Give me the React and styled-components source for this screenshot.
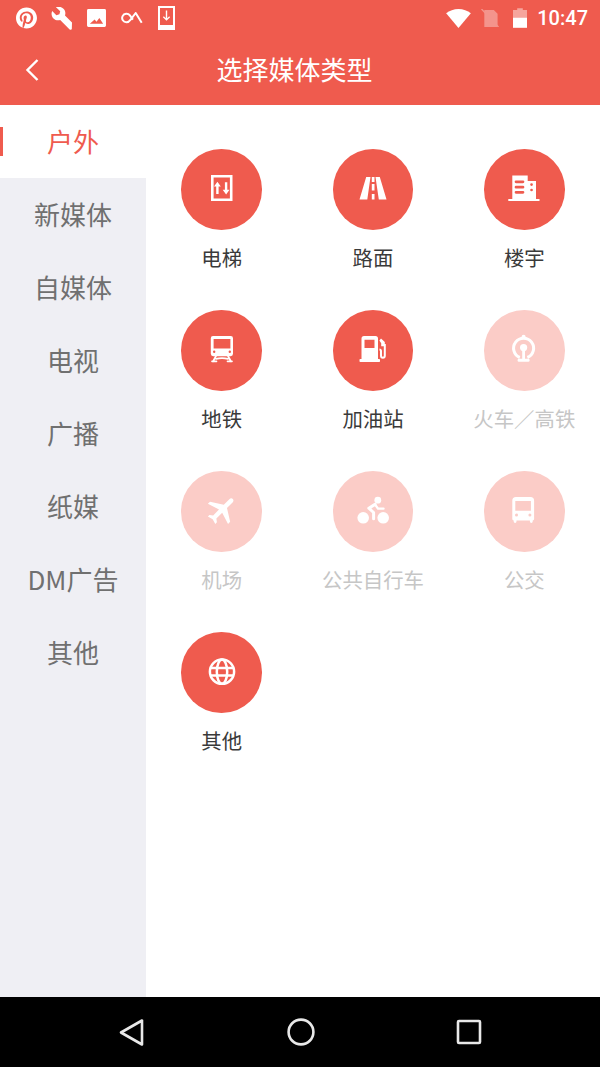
import React from "react";
import styled, { createGlobalStyle } from "styled-components";

const Global = createGlobalStyle`
  html, body { margin: 0; padding: 0; background: #fff; }
  body { font-family: "Noto Sans CJK SC", "Noto Sans", sans-serif; }
  * { box-sizing: border-box; }
`;
const RED = "#ef5b4e";

const Screen = styled.div`
  width: 600px; height: 1067px; display: flex; flex-direction: column; overflow: hidden;
`;
const Header = styled.header`
  height: 105px; background: ${RED}; color: #fff; display: flex; flex-direction: column; flex: none;
`;
const StatusBar = styled.div`
  height: 38px; display: flex; align-items: center; justify-content: space-between; padding: 0 12px 2px 16px;
`;
const StatusGroup = styled.div`
  display: flex; align-items: center; gap: ${p => p.$gap}px;
`;
const StatusSvg = styled.svg`
  display: block; flex: none; fill: #fff; margin-left: ${p => p.$ml || 0}px; opacity: ${p => p.$dim || 1};
`;
const Clock = styled.span`
  font-family: Roboto, sans-serif; font-size: 20px; font-weight: 500; line-height: 24px; width: 51px; white-space: nowrap; text-align: right;
`;
const Toolbar = styled.div`
  flex: 1; display: flex; align-items: center; padding-right: 75px; padding-bottom: 5px;
`;
const BackButton = styled.div`
  width: 64px; height: 40px; display: flex; align-items: center; padding-left: 25px; flex: none; position: relative; top: 1px;
`;
const Title = styled.h1`
  flex: 1; margin: 0; font-size: 26px; font-weight: 400; line-height: 36px; text-align: center; color: #fff;
`;
const Body = styled.main`
  flex: 1; display: flex; min-height: 0;
`;
const Sidebar = styled.nav`
  width: 146px; background: #efeff4; flex: none;
`;
const SideItem = styled.div`
  position: relative; height: 73px; display: flex; align-items: center; justify-content: center;
  font-size: 26px; line-height: 36px; padding-bottom: 1px; white-space: nowrap;
  color: ${p => (p.$active ? RED : "#707070")};
  background: ${p => (p.$active ? "#fff" : "transparent")};
  ${p => p.$active && `&::before { content: ""; position: absolute; left: 0; top: 22px; width: 3px; height: 29px; background: ${RED}; }`}
`;
const Grid = styled.section`
  flex: 1; display: grid; grid-template-columns: repeat(3, 1fr); grid-auto-rows: 161px; padding-top: 44px; background: #fff; align-content: start;
`;
const Cell = styled.div`
  display: flex; flex-direction: column; align-items: center;
`;
const Circle = styled.div`
  width: 80.5px; height: 80.5px; border-radius: 50%; background: ${p => (p.$off ? "#fbccc7" : RED)};
  display: flex; align-items: center; justify-content: center; flex: none;
`;
const IconSvg = styled.svg`
  display: block; width: 40px; height: 40px; fill: #fff;
`;
const Label = styled.span`
  margin-top: 13.5px; font-size: 20.4px; line-height: 28px; white-space: nowrap; color: ${p => (p.$off ? "#c6c6c6" : "#3a3a3a")};
`;
const NavBar = styled.footer`
  height: 70px; background: #000; flex: none; display: flex; align-items: center; justify-content: space-between; padding: 0 117px 0 118px;
`;
const NavSvg = styled.svg`
  display: block; fill: none; stroke: #e8e8e8; stroke-width: 2.6; stroke-linejoin: round;
`;

const Icon = ({ children }) => <IconSvg viewBox="0 0 40 40">{children}</IconSvg>;

const icons = {
  elevator: (
    <>
      <path fillRule="evenodd" d="M9 6h21.500v26H9zM11.600 8.600v20.800h16.300V8.600z" />
      <path d="M15.400 13l3.400 4.600h-2.200v7.600h-2.400v-7.600h-2.200zM24.100 25.600l-3.400-4.600h2.200v-7.600h2.400V21h2.200z" transform="translate(0 -.2)" />
    </>
  ),
  road: (
    <>
      <path d="M6.500 30.500h7.800L17.500 8h-4.300zM25.800 30.500h7.700L26.800 8h-4.300z" />
      <path d="M18.800 8h2.700v5h-2.700zM18.800 15h2.700v6.600h-2.700zM18.800 25h2.700v5.500h-2.700z" />
    </>
  ),
  building: (
    <>
      <path fillRule="evenodd" d="M8.300 6.500h15.400V12H32v18.500H8.300zM12 11.500a1.300 1.300 0 0 0 0 2.700h7a1.300 1.300 0 0 0 0-2.700zM12 16.800a1.300 1.300 0 0 0 0 2.700h7a1.300 1.300 0 0 0 0-2.700zM12 22a1.300 1.300 0 0 0 0 2.700h7a1.300 1.300 0 0 0 0-2.700zM26.200 15.600a1.300 1.300 0 1 0 2.700 0 1.300 1.300 0 0 0-2.700 0zM26.200 21a1.300 1.300 0 1 0 2.700 0 1.300 1.300 0 0 0-2.700 0z" />
      <rect x="4.300" y="30" width="31.200" height="2" />
    </>
  ),
  subway: (
    <>
      <path fillRule="evenodd" d="M11 6h17.800a2.200 2.200 0 0 1 2.200 2.200v15.600a2.400 2.400 0 0 1-2.400 2.400H11.200a2.400 2.400 0 0 1-2.400-2.400V8.200A2.200 2.200 0 0 1 11 6zM11.600 9v9.600h16.800V9zM11 21.800a1.200 1.200 0 1 0 2.400 0 1.200 1.200 0 0 0-2.400 0zM26.600 21.800a1.200 1.200 0 1 0 2.400 0 1.200 1.200 0 0 0-2.400 0z" />
      <path d="M14 26l-3 5.500M26 26l3 5.500M14 28.800q6-1.400 12 0M10 31.300h4.500M25.500 31.300H30" fill="none" stroke="#fff" strokeWidth="1.700" strokeLinecap="round" />
    </>
  ),
  gas: (
    <>
      <path fillRule="evenodd" d="M11 6h11.500A2.500 2.500 0 0 1 25 8.500V29H8.500V8.500A2.500 2.500 0 0 1 11 6zM11.500 9.800V18h10V9.800z" />
      <rect x="6.500" y="29" width="20.500" height="3" rx=".8" />
      <path d="M26.500 19.500a1.500 1.500 0 0 1 1.500 1.500v4.800a1.900 1.900 0 0 0 3.800 0V14" fill="none" stroke="#fff" strokeWidth="2" />
      <path d="M28 8.500l3.800 3.500v4.200h-3.600v-3l-1.800-2.700z" />
    </>
  ),
  rail: (
    <>
      <path d="M15.800 27.500a10 10 0 1 1 7.600 0" fill="none" stroke="#fff" strokeWidth="3" />
      <circle cx="19.600" cy="6.800" r="2" />
      <circle cx="19.600" cy="17.600" r="3.600" />
      <rect x="18.200" y="18" width="2.800" height="11" />
      <rect x="13.600" y="28.800" width="12" height="3" rx="1.300" />
    </>
  ),
  plane: (
    <g transform="translate(20.200 18.600) rotate(45) scale(1.5) translate(-11.500 -12)">
      <path d="M21 16v-2l-8-5V3.500c0-.83-.67-1.500-1.500-1.500S10 2.670 10 3.500V9l-8 5v2l8-2.500V19l-2 1.500V22l3.500-1 3.500 1v-1.500L13 19v-5.500l8 2.500z" />
    </g>
  ),
  bike: (
    <>
      <circle cx="10.200" cy="26.800" r="5.800" />
      <circle cx="30.200" cy="26.800" r="5.800" />
      <circle cx="24.800" cy="9.200" r="3.400" />
      <path d="M22 13.400l-6.200 3.800 4.800 4.300v6.300" fill="none" stroke="#fff" strokeWidth="3" strokeLinecap="round" strokeLinejoin="round" />
      <path d="M22 13.400l3 4.200h5.500" fill="none" stroke="#fff" strokeWidth="2.400" strokeLinecap="round" strokeLinejoin="round" />
    </>
  ),
  bus: (
    <>
      <path fillRule="evenodd" d="M12 6h14.400a3.700 3.700 0 0 1 3.700 3.700V28a1.600 1.600 0 0 1-1.400 1.600v1a1.400 1.400 0 0 1-2.800 0v-1H12.500v1a1.400 1.400 0 0 1-2.800 0v-1A1.600 1.600 0 0 1 8.300 28V9.700A3.700 3.700 0 0 1 12 6zM11.300 10v9.800h15.600V10zM11 24a1.500 1.500 0 1 0 3 0 1.500 1.500 0 0 0-3 0zM24.400 24a1.500 1.500 0 1 0 3 0 1.500 1.500 0 0 0-3 0z" />
    </>
  ),
  globe: (
    <g fill="none" stroke="#fff" strokeWidth="2.500">
      <circle cx="20" cy="19.700" r="12.100" />
      <ellipse cx="20" cy="19.700" rx="5.200" ry="12.100" />
      <path d="M8 16h24M8 23.400h24" />
    </g>
  ),
};

const sideItems = ["户外", "新媒体", "自媒体", "电视", "广播", "纸媒", "DM广告", "其他"];
const items = [
  { name: "电梯", icon: "elevator" },
  { name: "路面", icon: "road" },
  { name: "楼宇", icon: "building" },
  { name: "地铁", icon: "subway" },
  { name: "加油站", icon: "gas" },
  { name: "火车／高铁", icon: "rail", off: true },
  { name: "机场", icon: "plane", off: true },
  { name: "公共自行车", icon: "bike", off: true },
  { name: "公交", icon: "bus", off: true },
  { name: "其他", icon: "globe" },
];

export default function App() {
  return (
    <Screen>
      <Global />
      <Header>
        <StatusBar>
          <StatusGroup $gap={13}>
            <StatusSvg width="21" height="22" viewBox="0 0 24 24">
              <path d="M12 0C5.370 0 0 5.370 0 12c0 5.080 3.160 9.420 7.620 11.170-.1-.95-.2-2.400.04-3.440.22-.94 1.400-5.960 1.400-5.960s-.36-.72-.36-1.780c0-1.670.97-2.920 2.170-2.920 1.020 0 1.520.77 1.520 1.690 0 1.030-.66 2.570-.99 4-.28 1.190.6 2.160 1.770 2.160 2.130 0 3.760-2.240 3.760-5.480 0-2.870-2.060-4.870-5-4.870-3.410 0-5.410 2.550-5.410 5.200 0 1.030.4 2.130.89 2.730.1.120.11.220.08.340l-.33 1.360c-.05.220-.18.270-.41.160-1.500-.7-2.430-2.890-2.430-4.650 0-3.780 2.750-7.260 7.920-7.260 4.160 0 7.390 2.960 7.390 6.930 0 4.130-2.600 7.460-6.220 7.460-1.220 0-2.360-.63-2.750-1.380l-.75 2.850c-.27 1.040-1 2.350-1.490 3.150 1.120.35 2.310.53 3.550.53 6.630 0 12-5.370 12-12S18.630 0 12 0z" />
            </StatusSvg>
            <StatusSvg width="23" height="23" viewBox="0 0 23 23">
              <path d="M21.800 22.300c-.7.6-1.700.6-2.400-.1L10.200 13c-2.300.8-4.900.3-6.700-1.500C1.500 9.500 1 6.500 2.200 4l4.200 4.200 3-.9.800-3L6 .2C8.500-.8 11.500-.2 13.500 1.700c1.800 1.800 2.300 4.400 1.500 6.700l7 7z" />
            </StatusSvg>
            <StatusSvg width="19" height="18" viewBox="0 0 20 19" $ml={1}>
              <path fillRule="evenodd" d="M1.500 0h17A1.500 1.500 0 0 1 20 1.500v16a1.500 1.500 0 0 1-1.500 1.500h-17A1.500 1.500 0 0 1 0 17.500v-16A1.500 1.500 0 0 1 1.500 0zM3 15.500h14L13 9.500l-3 4-2-2.500z" />
            </StatusSvg>
            <StatusSvg width="22" height="12" viewBox="0 0 22 12" $ml={2}>
              <path d="M5.500 10.300a4.300 4.300 0 1 1 3.400-6.900l3 4.200M5.500 10.300c1.700 0 2.900-1 3.900-2.400L14.700 1l6 9.800" fill="none" stroke="#fff" strokeWidth="2" strokeLinejoin="round" />
            </StatusSvg>
            <StatusSvg width="17" height="24" viewBox="0 0 17 24" $ml={2}>
              <path fillRule="evenodd" d="M0 0h17v24H0zM2 2v17h13V2z" />
              <path d="M7.800 4.500h1.400v7.800l2-2 .9.900-3.600 3.600-3.600-3.600.9-.9 2 2z" />
            </StatusSvg>
          </StatusGroup>
          <StatusGroup $gap={10}>
            <StatusSvg width="25" height="19" viewBox="0 0 26 20">
              <path d="M13 20L0 4.500C3.500 1.700 8 0 13 0s9.500 1.700 13 4.500z" />
            </StatusSvg>
            <StatusSvg width="18" height="18" viewBox="0 0 18 19" $dim={0.35}>
              <path d="M3 1h10l4 4v14H3z" />
              <path d="M0 0l18 19" stroke="#fff" strokeWidth="1.500" />
            </StatusSvg>
            <StatusSvg width="14" height="20" viewBox="0 0 15 21" $ml={4}>
              <path d="M4.500 0h6v2H15v8H0V2h4.500z" opacity=".45" />
              <rect y="10" width="15" height="11" />
            </StatusSvg>
            <Clock>10:47</Clock>
          </StatusGroup>
        </StatusBar>
        <Toolbar>
          <BackButton>
            <svg width="14" height="22" viewBox="0 0 14 22" fill="none" stroke="#fff" strokeWidth="2.400">
              <path d="M12.500 1L2.500 11l10 10" />
            </svg>
          </BackButton>
          <Title>选择媒体类型</Title>
        </Toolbar>
      </Header>
      <Body>
        <Sidebar>
          {sideItems.map((s, i) => (
            <SideItem key={s} $active={i === 0}>{s}</SideItem>
          ))}
        </Sidebar>
        <Grid>
          {items.map(it => (
            <Cell key={it.name}>
              <Circle $off={it.off}>
                <Icon>{icons[it.icon]}</Icon>
              </Circle>
              <Label $off={it.off}>{it.name}</Label>
            </Cell>
          ))}
        </Grid>
      </Body>
      <NavBar>
        <NavSvg width="28" height="30" viewBox="0 0 28 30">
          <path d="M24 3.500v24L3 15.500z" />
        </NavSvg>
        <NavSvg width="30" height="30" viewBox="0 0 30 30">
          <circle cx="15" cy="15" r="12.400" />
        </NavSvg>
        <NavSvg width="28" height="28" viewBox="0 0 28 28">
          <rect x="3" y="3" width="22" height="22" rx="1" />
        </NavSvg>
      </NavBar>
    </Screen>
  );
}
